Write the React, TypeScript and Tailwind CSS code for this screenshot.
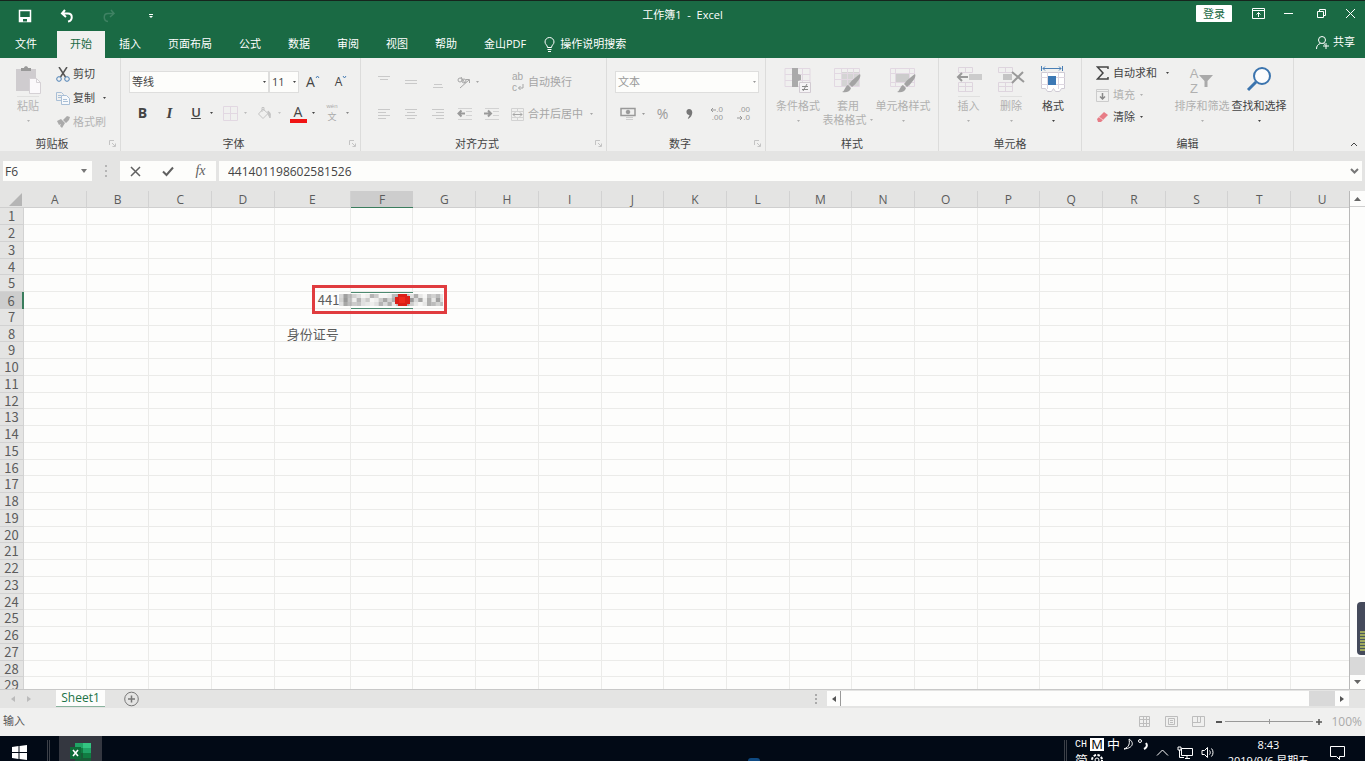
import { ReactNode } from "react";

const columns = "ABCDEFGHIJKLMNOPQRSTU".split("");
const rows = Array.from({ length: 29 }, (_, i) => i + 1);

const tabs = [
  "插入",
  "页面布局",
  "公式",
  "数据",
  "审阅",
  "视图",
  "帮助",
  "金山PDF",
];

// blurred digits of the id number, one grey level per block
const mosaic = [
  "b37acfe69ffe75b8c5df8a7d",
  "a28e6c9fe94a5b8c2b4e5d3c",
  "c4798cdec6b5d7549dfd57a7",
];

interface IconProps {
  w?: number;
  h?: number;
  children: ReactNode;
  className?: string;
}

const Icon = ({ w = 16, h = 16, children, className = "" }: IconProps) => (
  <svg
    width={w}
    height={h}
    viewBox={`0 0 ${w} ${h}`}
    fill="none"
    stroke="currentColor"
    className={`shrink-0 ${className}`}
    aria-hidden="true"
  >
    {children}
  </svg>
);

const Arrow = ({ className = "" }: { className?: string }) => (
  <Icon w={5} h={4} className={className}>
    <path d="M1 1h3L2.5 3z" fill="currentColor" stroke="none" />
  </Icon>
);

interface GroupProps {
  label: string;
  className: string;
  launcher?: boolean;
  children: ReactNode;
}

const Group = ({ label, className, launcher, children }: GroupProps) => (
  <section
    aria-label={label}
    className={`relative flex shrink-0 flex-col border-r border-[#dcdcdb] ${className}`}
  >
    <div className="flex flex-1">{children}</div>
    <h2 className="h-[15px] text-center leading-4 text-[#444]">{label}</h2>
    {launcher && (
      <button
        aria-label={`${label}设置`}
        className="absolute right-1 bottom-1 text-[#c4c4c4]"
      >
        <Icon w={7} h={7}>
          <path d="M.5 5V.5H5M3 3l3 3M6.500 3.500v3h-3" />
        </Icon>
      </button>
    )}
  </section>
);

interface ToolProps {
  label: string;
  children: ReactNode;
  className?: string;
}

const Tool = ({ label, children, className = "w-[27px]" }: ToolProps) => (
  <button
    aria-label={label}
    className={`flex h-6 shrink-0 items-center justify-center ${className}`}
  >
    {children}
  </button>
);

const SplitTool = ({ label, children, className = "" }: ToolProps) => (
  <button
    aria-label={label}
    className={`flex h-6 shrink-0 items-center ${className}`}
  >
    <span className="flex w-[26px] justify-center">{children}</span>
    <span className="w-2">
      <Arrow />
    </span>
  </button>
);

interface BigToolProps {
  label: ReactNode;
  icon: ReactNode;
  className: string;
  divider?: boolean;
  arrow?: boolean;
}

const BigTool = ({
  label,
  icon,
  className,
  divider,
  arrow = true,
}: BigToolProps) => (
  <button
    className={`flex shrink-0 flex-col items-center pt-2 whitespace-nowrap ${className}`}
  >
    <span className="flex h-[30px] items-start">{icon}</span>
    <span
      className={`border-t pt-[2px] leading-[14px] ${divider ? "border-[#e0e0df]" : "border-transparent"}`}
    >
      {label}
    </span>
    {arrow && <Arrow className="mt-[6px]" />}
  </button>
);

interface BoxProps {
  label: string;
  value: string;
  className: string;
}

const SelectBox = ({ label, value, className }: BoxProps) => (
  <div className={`relative h-[22px] ${className}`}>
    <select
      aria-label={label}
      className="block h-full w-full appearance-none border border-[#dededd] bg-[#fdfdfb] px-[2px] text-[11px]"
    >
      <option>{value}</option>
    </select>
    <Arrow className="pointer-events-none absolute top-[9px] right-[2px]" />
  </div>
);

const lineIcon = (d: string) => (
  <Icon w={14} h={14} className="text-[#c9c9c9]">
    <path d={d} />
  </Icon>
);

const TitleBar = () => (
  <header className="flex h-[30px] items-center border-t border-[#16251d] px-[18px] text-white">
    <div className="flex flex-1 items-center">
      <button aria-label="保存">
        <Icon w={14} h={14}>
          <path d="M1.500 1.500h11v11h-11z" strokeWidth="1.500" />
          <path d="M2 8h10v5H2z" fill="currentColor" stroke="none" />
          <path d="M5 10h4v2.500H5z" fill="#1a6a44" stroke="none" />
        </Icon>
      </button>
      <button aria-label="撤消" className="ml-7">
        <Icon w={14} h={14}>
          <path d="M5 1L2 4.500 6 8M2.500 4.500H8c5 0 5 7 0 8" strokeWidth="2" />
        </Icon>
      </button>
      <button aria-label="恢复" className="ml-7 text-[#3f8263]">
        <Icon w={14} h={14}>
          <path d="M9 1l3 3.500L8 8M11.500 4.500H6c-5 0-5 7 0 8" strokeWidth="1.500" />
        </Icon>
      </button>
      <button aria-label="自定义快速访问工具栏" className="ml-8">
        <Icon w={6} h={6}>
          <path d="M1 1h4v1H1zM1 3h4L3 5z" fill="currentColor" stroke="none" />
        </Icon>
      </button>
    </div>
    <h1 className="whitespace-pre">工作簿1  -  Excel</h1>
    <div className="flex flex-1 items-center justify-end">
      <button className="mr-5 mb-1 h-[17px] w-9 rounded-[1px] bg-white leading-[17px] text-[#1a6a44]">
        登录
      </button>
      <div className="-mr-[9px] mb-1 flex items-center gap-[18px]">
        <button aria-label="功能区显示选项">
          <Icon w={13} h={11}>
            <path d="M.5.5h12v10H.5zM.5 2.500h12M6.500 9V4.500M4.500 6.500l2-2 2 2" />
          </Icon>
        </button>
        <button aria-label="最小化">
          <Icon w={11} h={11}>
            <path d="M1 5.500h9" />
          </Icon>
        </button>
        <button aria-label="向下还原" className="ml-1">
          <Icon w={11} h={11}>
            <path d="M1.500 3.500h6v6h-6zM3.500 3V1.500h6v6H8" />
          </Icon>
        </button>
        <button aria-label="关闭">
          <Icon w={11} h={11}>
            <path d="M1 1l9 9M10 1l-9 9" />
          </Icon>
        </button>
      </div>
    </div>
  </header>
);

const TabBar = () => (
  <nav className="flex h-7 items-stretch gap-px pt-px pr-[10px] text-white">
    <button className="w-14 pr-1">文件</button>
    <button className="bg-[#f0f0ef] px-[13px] text-[#1a6a44]">开始</button>
    {tabs.map((tab) => (
      <button key={tab} className="px-[13px]">
        {tab}
      </button>
    ))}
    <button className="ml-1 flex items-center gap-[5px]">
      <Icon w={11} h={15}>
        <path d="M3.500 10.500C3.500 8 1 7.500 1 5a4.500 4.500 0 019 0c0 2.500-2.500 3-2.500 5.500zM3.500 12.500h4M4 14.500h3" />
      </Icon>
      操作说明搜索
    </button>
    <button className="mb-1 ml-auto flex items-center gap-1">
      <Icon w={13} h={13}>
        <circle cx="6" cy="4" r="3.500" />
        <path d="M.5 13c0-3 1.500-5 4-5.500M7.500 7.500L9 8.500M10 7v6M7 10h6" />
      </Icon>
      共享
    </button>
  </nav>
);

const Clipboard = () => (
  <Group label="剪贴板" launcher className="w-[121px] pr-4">
    <BigTool
      className="w-14 text-[#b3b3b3]"
      divider
      label="粘贴"
      icon={
        <Icon w={26} h={28}>
          <path d="M1 3h20v22H1z" fill="#cfcccf" stroke="none" />
          <path d="M6 5V2h3c0-2.500 4-2.500 4 0h3v3z" fill="#999" stroke="none" />
          <path d="M14.500 12.500h7l4 4v11h-11z" fill="#fbf9fb" stroke="#d5d1d5" />
          <path d="M21.500 12.500v4h4" stroke="#d5d1d5" />
        </Icon>
      }
    />
    <div className="flex flex-col pt-1 whitespace-nowrap">
      <button className="flex h-6 items-center gap-[3px]">
        <Icon w={14} h={15}>
          <path d="M3 0l6.500 10M11 0L4.500 10" stroke="#555" strokeWidth="1.500" />
          <circle cx="3" cy="12" r="2.300" stroke="#4a7fb5" />
          <circle cx="11" cy="12" r="2.300" stroke="#4a7fb5" />
        </Icon>
        剪切
      </button>
      <button className="flex h-6 items-center gap-[3px]">
        <Icon w={14} h={14} className="text-[#a9bfd6]">
          <path d="M.5 1.500h5l2 2v6h-7zM2 4.500h3M2 6.500h3" />
          <path d="M5.500 4.500h5l3 3v6h-8z" fill="#f7f9fb" />
          <path d="M7 8.500h4M7 10.500h5" />
        </Icon>
        复制
        <Arrow className="ml-1" />
      </button>
      <button className="flex h-6 items-center gap-[3px] text-[#b3b3b3]">
        <Icon w={14} h={14}>
          <path d="M1 6l4-2 4 4-3 5-2-2 1-2-2 1zM7 5l4-4 3 1-1 3-3 3z" fill="#aaa" stroke="none" />
        </Icon>
        格式刷
      </button>
    </div>
  </Group>
);

const FontGroup = () => (
  <Group label="字体" launcher className="w-[240px] pr-[22px] pl-2">
    <div className="flex shrink-0 flex-col gap-[7px] pt-3">
      <div className="flex items-center">
        <SelectBox label="字体" value="等线" className="w-[140px]" />
        <SelectBox label="字号" value="11" className="w-[30px]" />
        <Tool label="增大字号" className="w-7">
          <span className="text-sm leading-none">A</span>
          <Icon w={5} h={14} className="text-[#4a7fb5]">
            <path d="M1 3l1.500-2L4 3" />
          </Icon>
        </Tool>
        <Tool label="减小字号" className="w-7">
          <span className="text-xs leading-none">A</span>
          <Icon w={5} h={14} className="text-[#4a7fb5]">
            <path d="M1 1l1.500 2L4 1" />
          </Icon>
        </Tool>
      </div>
      <div className="flex items-center">
        <Tool label="加粗">
          <b className="text-sm">B</b>
        </Tool>
        <Tool label="倾斜">
          <i className="font-['Liberation_Serif',serif] text-[15px] font-bold">I</i>
        </Tool>
        <SplitTool label="下划线">
          <span className="text-[13px] font-semibold underline">U</span>
        </SplitTool>
        <SplitTool label="边框" className="text-[#bbb]">
          <Icon w={15} h={15} className="text-[#e2d8e2]">
            <path d="M.5.5h14v14H.5zM7.500.5v14M.5 7.500h14" />
          </Icon>
        </SplitTool>
        <SplitTool label="填充颜色" className="text-[#c4c4c4]">
          <Icon w={15} h={14}>
            <path d="M6 3l5 4.500-5 5L1.500 8zM5 6V1.500h2V5" />
            <path d="M11 5c2 1 3 3 2 7-1-1-1-3-2-4z" fill="currentColor" />
          </Icon>
        </SplitTool>
        <SplitTool label="字体颜色">
          <span className="w-[17px] border-b-4 border-[#f01414] text-sm leading-[15px]">
            A
          </span>
        </SplitTool>
        <SplitTool label="拼音指南" className="text-[#888]">
          <span className="flex flex-col items-center text-[#aaa]">
            <span className="font-['Liberation_Sans',sans-serif] text-[6px] leading-[7px]">
              wén
            </span>
            <span className="font-['Noto_Sans_CJK_SC',sans-serif] text-[9px] leading-[13px]">
              文
            </span>
          </span>
        </SplitTool>
      </div>
    </div>
  </Group>
);

const AlignGroup = () => (
  <Group label="对齐方式" launcher className="w-[246px] pr-[22px] pl-[9px]">
    <div className="flex shrink-0 flex-col gap-2 pt-3 whitespace-nowrap text-[#a6a6a6]">
      <div className="flex items-center">
        <Tool label="顶端对齐">{lineIcon("M1 1.500h12M3 4.500h8")}</Tool>
        <Tool label="垂直居中">{lineIcon("M1 5.500h12M1 8.500h12")}</Tool>
        <Tool label="底端对齐">{lineIcon("M3 9.500h8M2 12.500h10")}</Tool>
        <Tool label="方向" className="w-[54px] justify-start gap-1 pl-[6px]">
          <Icon w={14} h={14}>
            <path d="M3 13L12 5M9 4.500h3.500V8" />
            <circle cx="3" cy="5" r="2" />
            <circle cx="7" cy="6" r="2" />
            <path d="M4 2l4 6" />
          </Icon>
          <Arrow />
        </Tool>
        <button className="ml-[7px] flex h-6 items-center gap-1">
          <span className="flex w-3 flex-col items-start font-['Liberation_Sans',sans-serif] text-[10px] leading-[11px]">
            <span>ab</span>
            <span className="flex items-center">
              c
              <Icon w={7} h={7}>
                <path d="M6 0v4H1.500M3.500 2l-2 2 2 2" />
              </Icon>
            </span>
          </span>
          自动换行
        </button>
      </div>
      <div className="flex items-center">
        <Tool label="左对齐">
          {lineIcon("M1 2.500h12M1 5.500h8M1 8.500h12M1 11.500h8")}
        </Tool>
        <Tool label="居中">
          {lineIcon("M1 2.500h12M3 5.500h8M1 8.500h12M3 11.500h8")}
        </Tool>
        <Tool label="右对齐">
          {lineIcon("M1 2.500h12M5 5.500h8M1 8.500h12M5 11.500h8")}
        </Tool>
        <Tool label="减少缩进量">
          <Icon w={15} h={14}>
            <path d="M1 1.500h14M9 4.500h6M9 8.500h6M1 12.500h14" stroke="#d2d2d2" />
            <path d="M8 6.500H1.500M4.500 3.500l-3 3 3 3" stroke="#999" strokeWidth="2" />
          </Icon>
        </Tool>
        <Tool label="增加缩进量">
          <Icon w={15} h={14}>
            <path d="M1 1.500h14M9 4.500h6M9 8.500h6M1 12.500h14" stroke="#d2d2d2" />
            <path d="M0 6.500h7M4 3.500l3 3-3 3" stroke="#999" strokeWidth="2" />
          </Icon>
        </Tool>
        <button className="ml-[6px] flex h-6 items-center gap-1">
          <Icon w={13} h={13}>
            <path d="M.5.5h12v12H.5zM.5 3.500h12M.5 9.500h12M6.500.5v3M6.500 9.500v3" stroke="#d2d2d2" />
            <path d="M2 6.500h9M4 4.500l-2 2 2 2M9 4.500l2 2-2 2" />
          </Icon>
          合并后居中
          <Arrow className="ml-[2px]" />
        </button>
      </div>
    </div>
  </Group>
);

const NumberGroup = () => (
  <Group label="数字" launcher className="w-[159px] pr-5 pl-2">
    <div className="flex shrink-0 flex-col gap-2 pt-3 text-[#999]">
      <SelectBox label="数字格式" value="文本" className="my-px w-[144px]" />
      <div className="flex items-center">
        <SplitTool label="会计数字格式">
          <Icon w={16} h={14}>
            <path d="M1 1.500h14v7H1z" strokeWidth="1.500" />
            <circle cx="8" cy="5" r="1.800" fill="currentColor" />
            <path d="M6 10.500h7M6 12.500h7" stroke="#ccc" />
          </Icon>
        </SplitTool>
        <Tool label="百分比样式">
          <span className="text-sm">%</span>
        </Tool>
        <Tool label="千位分隔样式">
          <Icon w={7} h={12}>
            <path d="M3 1c5 0 4 8-1 10-.5-1 1-2 1.500-4C-.5 7-.5 1 3 1z" fill="#777" stroke="none" />
          </Icon>
        </Tool>
        <Tool label="增加小数位数">
          <span className="flex flex-col items-end font-['Liberation_Sans',sans-serif] text-[8px] leading-2">
            <span className="flex items-center">
              <Icon w={6} h={6}>
                <path d="M6 3H1M3 1L1 3l2 2" />
              </Icon>
              .0
            </span>
            <span>.00</span>
          </span>
        </Tool>
        <Tool label="减少小数位数">
          <span className="flex flex-col items-end font-['Liberation_Sans',sans-serif] text-[8px] leading-2">
            <span>.00</span>
            <span className="flex items-center">
              <Icon w={6} h={6}>
                <path d="M0 3h5M3 1l2 2-2 2" />
              </Icon>
              .0
            </span>
          </span>
        </Tool>
      </div>
    </div>
  </Group>
);

const brush = (
  <path
    d="M27 8c2 3-4 10-8 13l-3-3c4-5 8-8 11-10zM15 19l3 3c-1 4-5 5-9 4 3-1 3-6 6-7z"
    fill="#a3a3a3"
    stroke="none"
  />
);

const StyleGroup = () => (
  <Group label="样式" className="w-[173px]">
    <div className="flex items-start pl-[7px] text-[#b0b0b0]">
      <BigTool
        className="w-[50px]"
        label="条件格式"
        icon={
          <Icon w={28} h={28}>
            <path d="M1 2.500h25v18H1zM1 8.500h25M1 14.500h25M18.500 2v18" stroke="#e2d8e2" />
            <path d="M8 2h6v6l3 1v5l-3 1v6H8z" fill="#aaa" stroke="none" />
            <path d="M15.500 16.500h11v10h-11z" fill="#f5f3f5" stroke="#d2cbd2" />
            <path d="M18 20.500h6M18 23.500h6M23 18l-4 7" stroke="#888" />
          </Icon>
        }
      />
      <BigTool
        className="w-[50px]"
        arrow={false}
        label={
          <>
            套用
            <br />
            <span className="flex items-center gap-[2px]">
              表格格式 <Arrow />
            </span>
          </>
        }
        icon={
          <Icon w={30} h={28}>
            <path d="M8 6h18v14H8z" fill="#d4d4d4" stroke="none" />
            <path d="M1.500 2.500h25v18h-25zM1 7.500h25M1 13.500h25M8.500 2v18M14.500 2v18M20.500 2v18" stroke="#e2d8e2" />
            {brush}
          </Icon>
        }
      />
      <BigTool
        className="w-[60px]"
        label="单元格样式"
        icon={
          <Icon w={30} h={28}>
            <path d="M2.500 2.500h24v18h-24zM2 7.500h24M2 16.500h24M7.500 2v18M21.500 2v18" stroke="#e2d8e2" />
            <path d="M8 8h13v8H8z" fill="#ccc" stroke="none" />
            {brush}
          </Icon>
        }
      />
    </div>
  </Group>
);

const CellGroup = () => (
  <Group label="单元格" className="w-[143px]">
    <div className="flex items-start pl-2 text-[#b0b0b0]">
      <BigTool
        className="w-[43px]"
        divider
        label="插入"
        icon={
          <Icon w={28} h={26}>
            <path d="M3.500 1.500h14v5h-14zM3.500 16.500h14v9h-14zM3.500 20.500h14M10.500 1v5M10.500 16v9" stroke="#ded5de" />
            <path d="M14 8h13v6H14z" fill="#ccc" stroke="none" />
            <path d="M13 11H3M7 7l-4 4 4 4" stroke="#999" strokeWidth="2" />
          </Icon>
        }
      />
      <BigTool
        className="w-[42px]"
        divider
        label="删除"
        icon={
          <Icon w={28} h={26}>
            <path d="M1.500 1.500h14v5h-14zM1.500 16.500h14v9h-14zM1.500 20.500h14M8.500 1v5M8.500 16v9" stroke="#ded5de" />
            <path d="M6 8h9v6H6z" fill="#c4c4c4" stroke="none" />
            <path d="M15 6l12 10M26 6L15 17" stroke="#999" strokeWidth="2" />
          </Icon>
        }
      />
      <BigTool
        className="w-[42px] text-[#444]"
        label="格式"
        icon={
          <Icon w={26} h={27}>
            <path d="M3 2.500h18M5 .5l-2 2 2 2M19 .5l2 2-2 2M1.500 0v5M22.500 0v5" stroke="#4a7fb5" />
            <path d="M1.500 6.500h23v16h-3l-2 3h-4l-2-3-2 3h-4l-2-3h-4z" fill="#fff" stroke="#cfcad4" />
            <path d="M7.500 6v17M18.500 6v17M1 11.500h24M1 18.500h24" stroke="#ddd6e0" />
            <path d="M8 10h8v9H8z" fill="#3c78b4" stroke="none" />
          </Icon>
        }
      />
    </div>
  </Group>
);

const EditGroup = () => (
  <Group label="编辑" className="w-[212px]">
    <div className="flex w-[88px] flex-col pt-1 pl-[14px] whitespace-nowrap">
      <button className="flex h-[22px] items-center gap-1">
        <Icon w={13} h={14}>
          <path d="M12 3V1H1.500L7 7l-5.500 6H12v-2" strokeWidth="1.500" />
        </Icon>
        自动求和
        <Arrow className="ml-1" />
      </button>
      <button className="flex h-[22px] items-center gap-1 text-[#b0b0b0]">
        <Icon w={13} h={13}>
          <path d="M.5.5h12v12H.5zM.5 2.500h12" stroke="#ccc" />
          <path d="M6.500 4v6M4 7.500L6.500 10 9 7.500" stroke="#888" strokeWidth="1.500" />
        </Icon>
        填充
        <Arrow />
      </button>
      <button className="flex h-[22px] items-center gap-1">
        <Icon w={13} h={12}>
          <path d="M1 8l7-7 4 3-7 7H2z" fill="#e77c86" stroke="none" />
          <path d="M3 6l4 3" stroke="#f6c4c8" />
        </Icon>
        清除
        <Arrow />
      </button>
    </div>
    <BigTool
      className="w-[60px] pl-1 text-[#b0b0b0]"
      label="排序和筛选"
      icon={
        <span className="flex items-center">
          <span className="flex flex-col font-['Liberation_Sans',sans-serif] text-[13px] leading-[15px]">
            <span>A</span>
            <span>Z</span>
          </span>
          <Icon w={16} h={14}>
            <path d="M1 1h14L9.500 7v6h-3V7z" fill="#aaa" stroke="none" />
          </Icon>
        </span>
      }
    />
    <BigTool
      className="w-[58px]"
      label="查找和选择"
      icon={
        <Icon w={26} h={26} className="text-[#3b74ae]">
          <circle cx="16" cy="10" r="8" strokeWidth="2" fill="#fbfcfd" />
          <path d="M10 16l-8 8" strokeWidth="3" />
        </Icon>
      }
    />
  </Group>
);

const FormulaBar = () => (
  <div className="flex h-10 items-start bg-[#e4e4e3] pt-[10px] pr-[3px] pl-[3px] text-[#444]">
    <div className="relative h-5 w-[89px]">
      <input
        aria-label="名称框"
        defaultValue="F6"
        className="h-full w-full bg-[#fdfdfb] px-[2px] text-xs"
      />
      <Icon w={6} h={4} className="absolute top-2 right-[5px]">
        <path d="M0 0h6L3 4z" fill="#777" stroke="none" />
      </Icon>
    </div>
    <span className="flex h-5 w-[28px] flex-col items-center justify-center gap-[3px]">
      <i className="size-[2px] bg-[#b5b5b5]" />
      <i className="size-[2px] bg-[#b5b5b5]" />
      <i className="size-[2px] bg-[#b5b5b5]" />
    </span>
    <div className="flex h-5 w-24 items-center justify-around bg-[#fdfdfb] text-[#606060]">
      <button aria-label="取消">
        <Icon w={11} h={11}>
          <path d="M1 1l9 9M10 1l-9 9" strokeWidth="1.500" />
        </Icon>
      </button>
      <button aria-label="输入">
        <Icon w={12} h={11}>
          <path d="M1 5.500L4.500 9 11 1.500" strokeWidth="2" />
        </Icon>
      </button>
      <button
        aria-label="插入函数"
        className="font-['Liberation_Serif',serif] text-sm leading-5 italic"
      >
        fx
      </button>
    </div>
    <div className="relative ml-[3px] h-5 flex-1">
      <input
        aria-label="编辑栏"
        defaultValue="441401198602581526"
        className="h-full w-full bg-[#fdfdfb] px-[9px] text-xs"
      />
      <Icon w={9} h={6} className="absolute top-[7px] right-[3px] text-[#777]">
        <path d="M1 1l3.500 3.500L8 1" strokeWidth="2" />
      </Icon>
    </div>
  </div>
);

const MaskedNumber = () => (
  <div className="absolute -top-2 -left-[39px] flex h-[29px] w-[135px] items-center border-3 border-[#e03c3f] pl-[3px]">
    <span>441</span>
    <svg width="104" height="13" viewBox="0 0 104 13" aria-hidden="true">
      {mosaic.map((line, y) =>
        line
          .split("")
          .map((c, x) => (
            <rect
              key={`${x}-${y}`}
              x={x * 4.4}
              y={y * 4 + 1}
              width="4.400"
              height="4"
              fill="#8a8a8a"
              opacity={1 - parseInt(c, 16) / 16}
            />
          )),
      )}
      <path d="M56 4h3V1h9v2h3v8h-3v2h-9v-2h-3z" fill="#dc2018" />
      <path d="M60 4h6v6h-6z" fill="#ee2a1c" />
    </svg>
  </div>
);

const Sheet = () => (
  <main className="flex min-h-0 flex-1 bg-[#fdfdfc]">
    <div className="min-w-0 flex-1 overflow-hidden border-r border-[#b9b9b9]">
      <table className="w-[calc(100%+5px)] table-fixed border-separate border-spacing-0 font-['Noto_Sans_CJK_SC',sans-serif] text-[13px] leading-3 text-[#5c5c5c]">
        <colgroup>
          <col className="w-6" />
          {columns.map((c) => (
            <col key={c} className={c === "E" ? "w-[76px]" : ""} />
          ))}
        </colgroup>
        <thead className="font-['Open_Sans',sans-serif] text-xs leading-[15px]">
          <tr className="h-4 bg-[#e4e4e3]">
            <td aria-label="全选" className="border-b border-[#cfcfcf]">
              <Icon w={14} h={14} className="ml-2">
                <path d="M14 1v13H1z" fill="#b5b5b5" stroke="none" />
              </Icon>
            </td>
            {columns.map((c) => (
              <th
                key={c}
                scope="col"
                className={
                  c === "F"
                    ? "border-b border-[#3a7d5d] bg-[#cdcdcd] p-0 pt-px font-normal"
                    : "border-r border-b border-r-[#d2d2d2] border-b-[#cfcfcf] p-0 pt-px font-normal"
                }
              >
                {c}
              </th>
            ))}
          </tr>
        </thead>
        <tbody>
          {rows.map((r) => (
            <tr key={r} className="h-[17px] nth-[4n]:h-4">
              <th
                scope="row"
                className={
                  r === 6
                    ? "border-r-2 border-[#3a7d5d] bg-[#cdcdcd] p-0 font-normal"
                    : "border-r border-b border-[#d2d2d2] bg-[#e4e4e3] p-0 font-normal"
                }
              >
                {r}
              </th>
              {columns.map((c) => (
                <td
                  key={c}
                  className={
                    c === "F" && r === 6
                      ? "relative border-y border-[#4c8a70] p-0"
                      : "border-r border-b border-[#ebebe9] p-0"
                  }
                >
                  {c === "F" && r === 6 && <MaskedNumber />}
                  {c === "E" && r === 8 && (
                    <div className="pl-3 whitespace-nowrap">身份证号</div>
                  )}
                </td>
              ))}
            </tr>
          ))}
        </tbody>
      </table>
    </div>
    <div className="relative flex w-[15px] flex-col bg-[#fdfdfc] text-[#666]">
      <button
        aria-label="向上滚动"
        className="flex h-4 items-center justify-center border-b border-[#cfcfcf]"
      >
        <Icon w={7} h={4}>
          <path d="M0 4h7L3.500 0z" fill="currentColor" stroke="none" />
        </Icon>
      </button>
      <div className="flex-1" />
      <div className="h-[18px] bg-[#d9d9d9]" />
      <button
        aria-label="向下滚动"
        className="flex h-[14px] items-center justify-center"
      >
        <Icon w={7} h={4}>
          <path d="M0 0h7L3.500 4z" fill="currentColor" stroke="none" />
        </Icon>
      </button>
      {/* level meter docked on the screen edge */}
      <div className="absolute right-0 bottom-[34px] flex h-[53px] w-2 flex-col justify-end rounded-l bg-[#454a5b] pb-1 pl-[3px]">
        <div className="h-5 bg-[repeating-linear-gradient(#9fa95e_0_2px,#4a5a5f_2px_3px)]" />
      </div>
    </div>
  </main>
);

const SheetTabs = () => (
  <div className="flex h-[19px] items-start border-t border-[#c8c8c8] bg-[#e4e4e3]">
    <div className="flex h-[18px] w-14 items-center gap-3 pl-[11px] text-[#bbb]">
      <Icon w={4} h={6}>
        <path d="M4 0v6L0 3z" fill="currentColor" stroke="none" />
      </Icon>
      <Icon w={4} h={6}>
        <path d="M0 0v6l4-3z" fill="currentColor" stroke="none" />
      </Icon>
    </div>
    <button className="h-[17px] w-[49px] border-b border-[#8ab39e] bg-[#fdfdfc] text-xs leading-4 text-[#217346]">
      Sheet1
    </button>
    <button aria-label="新工作表" className="ml-[19px] text-[#777]">
      <Icon w={15} h={17}>
        <circle cx="7.500" cy="9" r="6.800" />
        <path d="M4 9h7M7.500 5.500v7" strokeWidth="1.500" />
      </Icon>
    </button>
    <div className="flex h-[18px] flex-1 items-center justify-end pr-[10px]">
      <Icon w={2} h={10}>
        <path d="M1 0v2M1 4v2M1 8v2" stroke="#aaa" strokeWidth="2" />
      </Icon>
    </div>
    <div className="mt-px mr-4 flex h-[15px] w-[522px] bg-[#fdfdfc] text-[#555]">
      <button
        aria-label="向左滚动"
        className="flex w-[14px] items-center justify-center border-r border-[#999]"
      >
        <Icon w={4} h={6}>
          <path d="M4 0v6L0 3z" fill="currentColor" stroke="none" />
        </Icon>
      </button>
      <div className="flex-1" />
      <div className="w-[26px] bg-[#d9d9d9]" />
      <button
        aria-label="向右滚动"
        className="flex w-[14px] items-center justify-center"
      >
        <Icon w={4} h={6}>
          <path d="M0 0v6l4-3z" fill="currentColor" stroke="none" />
        </Icon>
      </button>
    </div>
  </div>
);

const StatusBar = () => (
  <footer className="flex h-7 items-center bg-[#f0f0ef] pr-[3px] pb-px pl-[3px] text-[#555]">
    <span className="flex-1">输入</span>
    <div className="flex items-center gap-[14px] text-[#bdbdbd]">
      <button aria-label="普通">
        <Icon w={13} h={13}>
          <path d="M1.500 1.500h10v10h-10zM1 4.500h11M1 8.500h11M5.500 1v11M8.500 1v11" />
        </Icon>
      </button>
      <button aria-label="页面布局">
        <Icon w={13} h={13}>
          <path d="M.5 1.500h12v10H.5zM3.500 3.500h6v6h-6zM5 5.500h3M5 7.500h3" />
        </Icon>
      </button>
      <button aria-label="分页预览">
        <Icon w={13} h={13}>
          <path d="M.5 1.500h12v10H.5zM5.500 1v6M.5 7.500h8v-6" />
        </Icon>
      </button>
    </div>
    <button aria-label="缩小" className="ml-[10px]">
      <Icon w={8} h={8}>
        <path d="M1 4h6" strokeWidth="2" />
      </Icon>
    </button>
    <input
      type="range"
      aria-label="显示比例"
      className="mx-[2px] h-[7px] w-[88px] appearance-none bg-[linear-gradient(#999,#999),linear-gradient(#999,#999)] bg-[length:100%_1px,1px_5px] bg-center bg-no-repeat [&::-webkit-slider-thumb]:size-0 [&::-webkit-slider-thumb]:appearance-none"
    />
    <button aria-label="放大">
      <Icon w={8} h={8}>
        <path d="M1 4h6M4 1v6" strokeWidth="1.500" />
      </Icon>
    </button>
    <span className="ml-2 text-xs text-[#aaa]">100%</span>
  </footer>
);

const Taskbar = () => (
  <div className="flex h-[25px] shrink-0 items-start overflow-hidden bg-[#020a16] text-white">
    <button aria-label="开始" className="mt-[9px] ml-3">
      <Icon w={15} h={15}>
        <path
          d="M0 2l6.500-1v6H0zM7.500 1L15 0v7H7.500zM0 8h6.500v6L0 13zM7.500 8H15v7l-7.500-1z"
          fill="currentColor"
          stroke="none"
        />
      </Icon>
    </button>
    <div className="mt-1 ml-5 h-6 w-[3px] border-x border-[#3c4048]" />
    <button
      aria-label="Excel"
      className="ml-[9px] flex h-[25px] w-[43px] justify-center bg-[#343740] pt-[7px]"
    >
      <svg width="22" height="19" viewBox="0 0 22 19" aria-hidden="true">
        <path d="M5 0h8v9H5z" fill="#21a366" />
        <path d="M13 0h8v5h-8z" fill="#33c481" />
        <path d="M5 5h8v5H5z" fill="#107c41" />
        <path d="M13 5h8v5h-8z" fill="#21a366" />
        <path d="M5 10h16v9H5z" fill="#185c37" />
        <path d="M13 10h8v5h-8z" fill="#107c41" />
        <path d="M0 4h11v12H0z" fill="#0e6b38" />
        <path d="M3 7l5 6M8 7l-5 6" stroke="#fff" strokeWidth="1.600" />
      </svg>
    </button>
    <div className="flex flex-1 justify-end">
      <div className="mr-[304px] hidden h-[25px] items-end sm:flex">
        <div className="h-[3px] w-3 rounded-t-full bg-[#0f4a82]" />
      </div>
    </div>
    <div className="mt-1 mr-2 h-6 w-[3px] border-x border-[#3c4048]" />
    <div className="flex w-[77px] flex-col text-[13px] leading-[13px]">
      <div className="mt-[2px] flex items-center gap-[3px]">
        <span className="font-['Liberation_Mono',monospace] text-[10px]">CH</span>
        <span className="w-[14px] bg-white text-center text-black">M</span>
        <span>中</span>
        <Icon w={12} h={13}>
          <path d="M6 1c5 3 5 9-5 10 5-2 6-5 5-10z" />
        </Icon>
        <Icon w={10} h={13}>
          <circle cx="2" cy="3" r="1.500" />
          <path d="M8 5c2 3 0 5-2 6" strokeWidth="2" />
        </Icon>
      </div>
      <div className="mt-[2px] flex items-center gap-[2px]">
        <span>简</span>
        <Icon w={14} h={14}>
          <circle cx="7" cy="7" r="2" />
          <circle cx="7" cy="7" r="5" strokeWidth="2" strokeDasharray="2.500 1.400" />
        </Icon>
      </div>
    </div>
    <div className="mt-[10px] ml-1 flex items-center gap-2">
      <Icon w={13} h={13}>
        <path d="M1 9.500L6.500 4 12 9.500" />
      </Icon>
      <Icon w={16} h={13}>
        <path d="M4.500 2.500h11v7h-11zM8 12.500h5M10 10v2M1 1h3v3H1zM2.500 4v7.500H7" />
      </Icon>
      <Icon w={14} h={13}>
        <path d="M1 4.500h2.500l3-3v10l-3-3H1zM8.500 4.500c1 1 1 3 0 4M10.500 2.500c2 2 2 6 0 8" />
      </Icon>
    </div>
    <div className="flex w-[107px] flex-col items-center text-[11px] leading-4 whitespace-nowrap">
      <span className="mt-px">8:43</span>
      <span>2019/9/6 星期五</span>
    </div>
    <button aria-label="通知" className="mt-[9px] mr-[20px] ml-2">
      <Icon w={15} h={16}>
        <path d="M.5 1.500h14v10H9.500v3l-3-3h-6z" />
      </Icon>
    </button>
  </div>
);

const App = () => (
  <div className="flex h-screen flex-col overflow-hidden bg-[#f0f0ef] font-['Open_Sans','Noto_Sans_CJK_SC',sans-serif] text-[11px] text-[#444]">
    <div className="bg-[#1a6a44]">
      <TitleBar />
      <TabBar />
    </div>
    <div className="flex h-[93px] shrink-0">
      <Clipboard />
      <FontGroup />
      <AlignGroup />
      <NumberGroup />
      <StyleGroup />
      <CellGroup />
      <EditGroup />
      <button
        aria-label="折叠功能区"
        className="mt-auto mr-[7px] mb-1 ml-auto"
      >
        <Icon w={8} h={5}>
          <path d="M1 4l3-3 3 3" />
        </Icon>
      </button>
    </div>
    <FormulaBar />
    <Sheet />
    <SheetTabs />
    <StatusBar />
    <Taskbar />
  </div>
);

export default App;
